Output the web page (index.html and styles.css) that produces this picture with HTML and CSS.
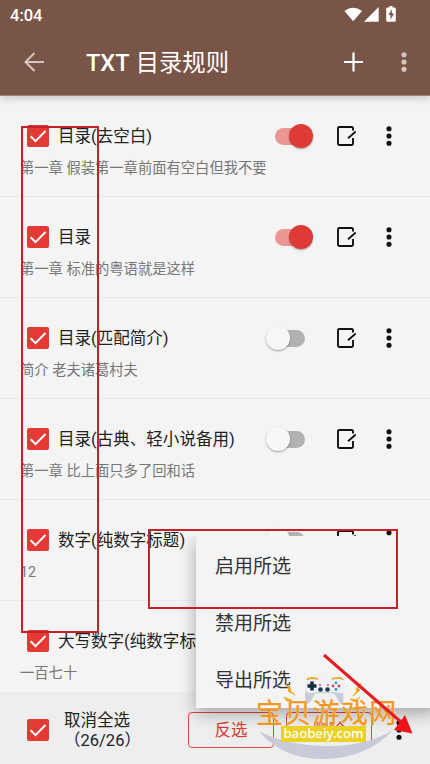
FILE: index.html
```
<!DOCTYPE html>
<html lang="zh-CN">
<head>
<meta charset="utf-8">
<title>TXT 目录规则</title>
<link rel="stylesheet" href="styles.css">
</head>
<body>
<svg width="0" height="0" class="defs">
  <symbol id="check" viewBox="0 0 22 22"><rect width="22" height="22" rx="2" fill="#e53935"/><path d="M3.700 11.200l4.800 4.900L18.500 6" fill="none" stroke="#fff" stroke-width="2"/></symbol>
  <symbol id="dots" viewBox="0 0 6 20"><circle cx="3" cy="2.800" r="2.550"/><circle cx="3" cy="10" r="2.550"/><circle cx="3" cy="17.200" r="2.550"/></symbol>
  <symbol id="edit" viewBox="0 0 20 20"><path d="M17 4.500V2.200Q17 1 15.800 1H3.200Q2 1 2 2.200v15.600Q2 19 3.200 19h12.600q1.200 0 1.200-1.200V12M12 12.300L19.800 5.500" fill="none" stroke="#111" stroke-width="1.900"/></symbol>
</svg>
<div class="screen">
  <header class="header">
    <div class="status">
      <span class="time">4:04</span>
      <svg class="signals" width="54" height="17" viewBox="0 0 54 17" fill="#fff"><path d="M.5 5Q9-1.500 18 5L9.200 15.300zM34.700 1v14.700H20zM45.500 1.500V0h3v1.500h2q1.300 0 1.300 1.300v11.600q0 1.300-1.300 1.300h-7q-1.300 0-1.300-1.300V2.800q0-1.300 1.300-1.300z"/><path d="M47.800 3l-3.300 6h2v4.700l3.500-6.200h-2.200z" fill="#795548"/></svg>
    </div>
    <div class="toolbar">
      <svg class="back" width="20" height="20" viewBox="0 0 20 20"><path d="M20 10H2M10.500 1L1.500 10l9 9" fill="none" stroke="#d7c6c0" stroke-width="2"/></svg>
      <h1>TXT <span>目录规则</span></h1>
      <svg width="20" height="20" viewBox="0 0 20 20"><path d="M9.500 .5v19M0 10h19" stroke="#fff" stroke-width="2.200"/></svg>
      <svg class="more" width="6" height="20"><use href="#dots"/></svg>
    </div>
  </header>
  <main class="rules">
    <section class="rule"><div class="line"><svg class="check"><use href="#check"/></svg><span class="name">目录(去空白)</span><i class="switch on"></i><svg class="edit"><use href="#edit"/></svg><svg class="dots"><use href="#dots"/></svg></div><p>第一章 假装第一章前面有空白但我不要</p></section>
    <section class="rule"><div class="line"><svg class="check"><use href="#check"/></svg><span class="name">目录</span><i class="switch on"></i><svg class="edit"><use href="#edit"/></svg><svg class="dots"><use href="#dots"/></svg></div><p>第一章 标准的粤语就是这样</p></section>
    <section class="rule"><div class="line"><svg class="check"><use href="#check"/></svg><span class="name">目录(匹配简介)</span><i class="switch"></i><svg class="edit"><use href="#edit"/></svg><svg class="dots"><use href="#dots"/></svg></div><p>简介 老夫诸葛村夫</p></section>
    <section class="rule"><div class="line"><svg class="check"><use href="#check"/></svg><span class="name">目录(古典、轻小说备用)</span><i class="switch"></i><svg class="edit"><use href="#edit"/></svg><svg class="dots"><use href="#dots"/></svg></div><p>第一章 比上面只多了回和话</p></section>
    <section class="rule"><div class="line"><svg class="check"><use href="#check"/></svg><span class="name">数字(纯数字标题)</span><i class="switch"></i><svg class="edit"><use href="#edit"/></svg><svg class="dots"><use href="#dots"/></svg></div><p>12</p></section>
    <section class="rule"><div class="line"><svg class="check"><use href="#check"/></svg><span class="name">大写数字(纯数字标</span></div><p>一百七十</p></section>
  </main>
  <footer class="actions">
    <svg class="check"><use href="#check"/></svg>
    <div class="all">取消全选<br>（26/26）</div>
    <button>反选</button><button>删除</button>
    <svg class="dots"><use href="#dots"/></svg>
  </footer>
  <div class="menu"><div>启用所选</div><div>禁用所选</div><div>导出所选</div></div>
  <div class="mark mark-checks"></div>
  <div class="mark mark-menu"></div>
  <div class="watermark">
    <svg width="144" height="90" viewBox="0 0 144 90">
      <circle cx="70" cy="18" r="17" fill="#f0f0f1"/>
      <path d="M5 59Q31 73 71 74T139 58Q113 86 71 87T5 59z" fill="#c8cad7"/>
      <path d="M53 8q1-2 5-2l6 1M89 8q-1-2-5-2l-6 1" fill="none" stroke="#eea62b" stroke-width="2"/>
      <path d="M52 11Q50 24 52 32q3 1 6-5 2-6 5-6h15q3 0 6 7 2 5 5 4 1-9-1-21z" fill="#c8cad9"/>
      <path d="M51 15q0-8 8-8 4 0 6 2h12q4-3 8-2 8 1 8 8 0 7-8 6l-6-1H63q-12 4-12-5z" fill="#eff0f6"/>
      <path d="M58 9.500v9M53.500 14h9" stroke="#152d3b" stroke-width="3.500"/>
      <g fill="#173d4b"><circle cx="66.500" cy="17.500" r="2.300"/><circle cx="73.500" cy="17.500" r="2.300"/></g>
      <g fill="#e44759"><circle cx="85" cy="14" r="1.400"/><circle cx="79" cy="14" r="1.400"/><circle cx="66" cy="13" r="1"/><circle cx="74" cy="13" r="1"/></g><g fill="#20a3b5"><circle cx="82" cy="10.800" r="1.400"/><circle cx="82" cy="17.500" r="1.400"/></g>
      <path d="M32 12l5 5-1 2 5 4-7-4 1-2zM30 25l4 2 4 1-5 1zM107 11l-5 6 1 2-4 5 7-6-2-1zM106 25l-4 3-6-1 5 3z" fill="#f3a51f" stroke="#f3a51f"/>
    </svg>
    <div class="brand">宝贝游戏网</div>
    <div class="domain">baobeiy.com</div>
  </div>
  <svg class="arrow" width="430" height="764" viewBox="0 0 430 764"><path d="M324 655L401 722" stroke="#e31e24" stroke-width="3"/><path d="M412.500 733.500L405 715 394 730z" fill="#f01418"/></svg>
</div>
</body>
</html>
```
FILE: styles.css
```
* { box-sizing: border-box; }
body { margin: 0; font-family: Roboto, "Noto Sans CJK SC", sans-serif; }
.defs { position: absolute; }
svg { display: block; flex: none; }
.screen { position: relative; display: flex; flex-direction: column; width: 430px; height: 764px; overflow: hidden; background: #f4f4f4; color: #222; }
.header { height: 96px; flex: none; background: #795548; border-bottom: 1px solid #a08578; box-shadow: 0 2px 8px rgba(0,0,0,.2); z-index: 1; }
.status { display: flex; justify-content: space-between; align-items: center; height: 30px; padding: 0 32px 0 10px; color: #fff; }
.time { padding-top: 1px; font-size: 16.500px; line-height: 20px; font-weight: 500; }
.signals { margin-top: -1px; }
.toolbar { display: flex; align-items: center; height: 64px; padding: 0 23px 0 24px; }
h1 { flex: 1; margin: 2px 0 0 42px; color: #fff; font-size: 23.500px; font-weight: 500; line-height: 30px; white-space: nowrap; }
h1 span { margin-left: 1px; font-size: 23.300px; font-weight: 400; }
.more { margin-left: 37px; fill: #d7c6c0; }
.rules { height: 596px; overflow: hidden; }
.rule { height: 101px; padding: 26px 0 0 20px; border-bottom: 1px solid #e9e9e9; }
.line { display: flex; align-items: center; height: 28px; padding: 0 38px 0 7px; }
.check { width: 22px; height: 22px; }
.name { flex: 1; margin-left: 9px; padding-top: 2px; font-size: 16.550px; line-height: 24px; white-space: nowrap; }
.switch { position: relative; width: 39px; height: 24px; margin-right: 31px; }
.switch::before { content: ""; position: absolute; left: 12px; top: 4px; width: 27px; height: 17px; border-radius: 9px; background: #b2b2b2; }
.switch::after { content: ""; position: absolute; left: 0; top: 0; width: 24px; height: 24px; border-radius: 50%; background: #f7f7f7; box-shadow: 0 1px 2px rgba(0,0,0,.35); }
.switch.on { left: 9px; }
.switch.on::before { left: 0; background: #ec9694; }
.switch.on::after { left: 14px; background: #e03a37; }
.edit { width: 20px; height: 20px; margin-right: 30px; }
.dots { width: 6px; height: 20px; fill: #111; }
.rule p { margin: 8px 0 0; font-size: 14.300px; line-height: 20px; color: #777; }
.actions { display: flex; align-items: center; height: 72px; padding: 3px 28px 0 27px; background: #eee; }
.all { width: 124px; margin: 2px 0 0 15px; font-size: 16.500px; line-height: 20px; white-space: nowrap; }
.actions button { width: 86px; height: 36px; padding: 2px 0 0; margin-right: 12px; border: 1px solid #dc4843; border-radius: 4px; background: transparent; color: #d93a35; font: inherit; font-size: 16.500px; line-height: 24px; }
.actions .dots { margin-left: auto; }
.menu { position: absolute; left: 196px; top: 536px; width: 240px; height: 172px; padding-top: 2px; background: #f4f4f4; box-shadow: 0 5px 16px rgba(0,0,0,.32); clip-path: inset(0 0 -40px -40px); font-size: 19px; color: #333; }
.menu div { height: 57px; padding-left: 19px; line-height: 57px; }
.mark { position: absolute; border: 2px solid #c8202a; }
.mark-checks { left: 21px; top: 126px; width: 78px; height: 507px; }
.mark-menu { left: 148px; top: 529px; width: 250px; height: 80px; }
.arrow { position: absolute; left: 0; top: 0; }
.watermark { position: absolute; left: 254px; top: 672px; width: 144px; height: 90px; }
.brand { position: absolute; left: 2px; top: 25px; width: 142px; font-size: 27px; line-height: 34px; letter-spacing: 1.300px; font-weight: 400; color: #ef9721; white-space: nowrap; -webkit-text-stroke: .300px #ef9721; text-shadow: 0 0 1px #fff; }
.domain { position: absolute; left: 27px; top: 54px; width: 85px; height: 16px; background: #ead027; color: #fff; font: 500 13.200px/15px "Noto Sans", sans-serif; text-align: center; white-space: nowrap; }
```
